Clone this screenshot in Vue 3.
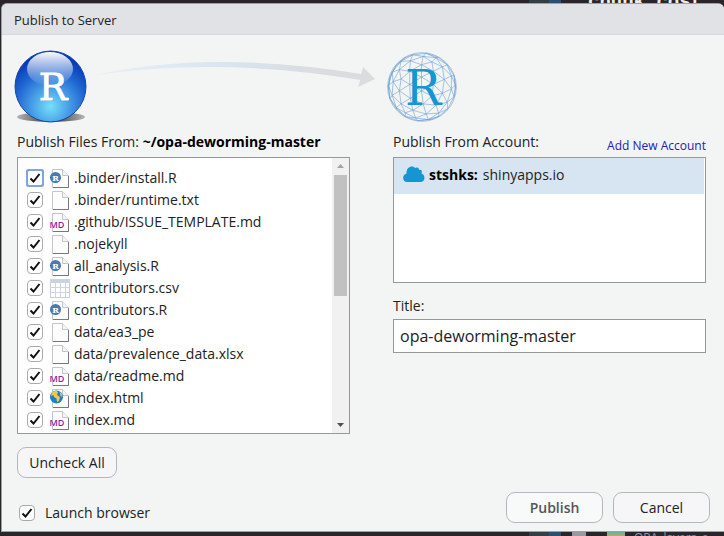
<script setup>
import { ref } from 'vue'

const files = ref([
  { name: '.binder/install.R', kind: 'r', checked: true },
  { name: '.binder/runtime.txt', kind: 'plain', checked: true },
  { name: '.github/ISSUE_TEMPLATE.md', kind: 'md', checked: true },
  { name: '.nojekyll', kind: 'plain', checked: true },
  { name: 'all_analysis.R', kind: 'r', checked: true },
  { name: 'contributors.csv', kind: 'csv', checked: true },
  { name: 'contributors.R', kind: 'r', checked: true },
  { name: 'data/ea3_pe', kind: 'plain', checked: true },
  { name: 'data/prevalence_data.xlsx', kind: 'plain', checked: true },
  { name: 'data/readme.md', kind: 'md', checked: true },
  { name: 'index.html', kind: 'html', checked: true },
  { name: 'index.md', kind: 'md', checked: true }
])
const title = ref('opa-deworming-master')
const launch = ref(true)

function uncheckAll() {
  files.value.forEach((f) => { f.checked = false })
}

// Wireframe globe: a subdivided icosahedron seen from the front.
function globePath(radius, cx, cy, freq) {
  const t = (1 + Math.sqrt(5)) / 2
  const v = [
    [-1, t, 0], [1, t, 0], [-1, -t, 0], [1, -t, 0],
    [0, -1, t], [0, 1, t], [0, -1, -t], [0, 1, -t],
    [t, 0, -1], [t, 0, 1], [-t, 0, -1], [-t, 0, 1]
  ]
  const faces = [
    [0, 11, 5], [0, 5, 1], [0, 1, 7], [0, 7, 10], [0, 10, 11],
    [1, 5, 9], [5, 11, 4], [11, 10, 2], [10, 7, 6], [7, 1, 8],
    [3, 9, 4], [3, 4, 2], [3, 2, 6], [3, 6, 8], [3, 8, 9],
    [4, 9, 5], [2, 4, 11], [6, 2, 10], [8, 6, 7], [9, 8, 1]
  ]
  const project = (p) => {
    const len = Math.hypot(...p)
    const [x, y, z] = p.map((n) => n / len)
    const a = 0.35
    const b = 0.3
    const x1 = x * Math.cos(a) + z * Math.sin(a)
    const z1 = z * Math.cos(a) - x * Math.sin(a)
    const y1 = y * Math.cos(b) - z1 * Math.sin(b)
    const z2 = y * Math.sin(b) + z1 * Math.cos(b)
    return [(cx + x1 * radius).toFixed(1), (cy + y1 * radius).toFixed(1), z2]
  }
  const edges = new Set()
  for (const [a, b, c] of faces) {
    const at = (i, j) => {
      const k = freq - i - j
      return project([0, 1, 2].map((n) => v[a][n] * k + v[b][n] * i + v[c][n] * j))
    }
    for (let i = 0; i < freq; i++) {
      for (let j = 0; j < freq - i; j++) {
        const tri = [at(i, j), at(i + 1, j), at(i, j + 1)]
        tri.forEach((p, n) => {
          const q = tri[(n + 1) % 3]
          if (p[2] < -0.2 || q[2] < -0.2) return
          const ends = [`${p[0]} ${p[1]}`, `${q[0]} ${q[1]}`].sort()
          edges.add(`M${ends[0]}L${ends[1]}`)
        })
      }
    }
  }
  return [...edges].join('')
}
const globe = globePath(34, 35, 35, 3)
</script>

<template>
  <div class="desktop">
    <div class="strip top" aria-hidden="true"><span class="tab"></span><span class="code">chunk_cost</span></div>
    <form class="dialog" role="dialog" aria-labelledby="dlg-title" @submit.prevent>
      <h1 id="dlg-title" class="caption">Publish to Server</h1>
      <div class="body">
        <div class="banner">
          <svg class="ball" viewBox="0 0 74 74" aria-hidden="true">
            <defs>
              <radialGradient id="ballFill" cx="0.5" cy="0.78" r="0.72">
                <stop offset="0" stop-color="#76e0fb" />
                <stop offset="0.3" stop-color="#4fa9ea" />
                <stop offset="0.68" stop-color="#1f66d2" />
                <stop offset="1" stop-color="#0638b4" />
              </radialGradient>
              <linearGradient id="ballShine" x1="0" y1="0" x2="0" y2="1">
                <stop offset="0" stop-color="#fff" stop-opacity="0.98" />
                <stop offset="0.45" stop-color="#fff" stop-opacity="0.55" />
                <stop offset="1" stop-color="#fff" stop-opacity="0" />
              </linearGradient>
              <linearGradient id="ballShade">
                <stop offset="0" stop-color="#b2b4b5" />
                <stop offset="0.5" stop-color="#333" />
                <stop offset="1" stop-color="#b2b4b5" />
              </linearGradient>
            </defs>
            <ellipse cx="37" cy="67" rx="34" ry="5" fill="url(#ballShade)" />
            <circle cx="36.500" cy="36.500" r="35.500" fill="url(#ballFill)" stroke="#1746ae" />
            <ellipse cx="36" cy="19" rx="23" ry="17" fill="url(#ballShine)" />
            <text class="slab" x="40" y="51" fill="#134aa5" opacity="0.4">R</text>
            <text class="slab" x="39" y="50" fill="#fff" stroke="#fff" stroke-width="0.8">R</text>
          </svg>
          <svg class="arrow" viewBox="0 0 300 40" aria-hidden="true">
            <defs>
              <linearGradient id="sweep">
                <stop offset="0" stop-color="#eaf0f5" />
                <stop offset="0.5" stop-color="#d8e4ef" />
                <stop offset="0.8" stop-color="#dadce0" />
              </linearGradient>
            </defs>
            <path d="M2 22Q120 -5 274 20L276 13L288 25L271 33L273 26Q130 2 2 22Z" fill="url(#sweep)" />
          </svg>
          <svg class="globe" viewBox="0 0 70 70" aria-hidden="true">
            <circle cx="35" cy="35" r="34.300" fill="none" stroke="#8db3dc" stroke-width="0.8" />
            <path :d="globe" fill="none" stroke="#6d9fd3" stroke-width="0.600" />
            <text class="slab big" x="36" y="53" fill="#1396d1">R</text>
          </svg>
        </div>

        <div class="columns">
          <section class="left">
            <div class="heading">Publish Files From: <b>~/opa-deworming-master</b></div>
            <div class="files">
              <ul>
                <li v-for="(file, i) in files" :key="file.name">
                  <label>
                    <input v-model="file.checked" type="checkbox" :class="{ focused: i === 0 }" />
                    <svg class="icon" viewBox="0 0 20 20" aria-hidden="true">
                      <template v-if="file.kind === 'csv'">
                        <rect x="0.500" y="1.500" width="19" height="18" fill="#fff" stroke="#c8cfdc" />
                        <path d="M0 1h20v4H0z" fill="#cbd3df" />
                        <path d="M5.500 5v15M10.500 5v15M15.500 5v15M1 9.500h18M1 14.500h18" stroke="#ccd5e6" />
                      </template>
                      <template v-else>
                        <path d="M2.500 1.500h10l6 6v12h-16z" fill="#fdfdfe" stroke="#c3c5ca" />
                        <path d="M18.500 8v11.500H3" fill="none" stroke="#737984" />
                        <path d="M12.500 1.500v6h6" fill="#f4f5f6" stroke="#c3c5ca" />
                      </template>
                      <template v-if="file.kind === 'r'">
                        <circle cx="5.500" cy="9.500" r="5.500" fill="#4b78ae" />
                        <text class="rmark" x="5.500" y="12.500">R</text>
                      </template>
                      <text v-if="file.kind === 'md'" class="mdmark" x="-0.500" y="16">MD</text>
                      <template v-if="file.kind === 'html'">
                        <circle cx="6.500" cy="9" r="6.500" fill="#1a83bd" />
                        <path d="M2 4.500L6 2.500L8 4L7 7L10 9L9 13L7 14L6.500 10.500L4 9L3.500 7L1 8Z" fill="#eec65a" />
                        <path d="M9.500 4L12 6L12.500 9L10.500 8Z" fill="#e4bd57" />
                      </template>
                    </svg>
                    <span>{{ file.name }}</span>
                  </label>
                </li>
              </ul>
              <div class="scrollbar" aria-hidden="true">
                <svg viewBox="0 0 7 4"><path d="M0 4L3.500 0L7 4Z" fill="#a3a3a3" /></svg>
                <div class="track"><div class="thumb"></div></div>
                <svg viewBox="0 0 7 4"><path d="M0 0L3.500 4L7 0Z" fill="#505050" /></svg>
              </div>
            </div>
            <button type="button" class="uncheck" @click="uncheckAll">Uncheck All</button>
          </section>

          <section class="right">
            <div class="heading split"><span>Publish From Account:</span><a href="#">Add New Account</a></div>
            <div class="accounts">
              <div class="account">
                <svg viewBox="0 0 22 16" aria-hidden="true">
                  <path d="M4 16C-1 16 -1 8.500 3.500 7.500C3 1 9 -1.500 12.500 2C15 1 16 2 16 4C18.500 3 19.500 5 18.500 7.500C23 9 22 16 18 16Z" fill="#1396d1" />
                </svg>
                <b>stshks:</b><span>shinyapps.io</span>
              </div>
            </div>
            <label class="title-label" for="content-title">Title:</label>
            <input id="content-title" v-model="title" class="title-input" type="text" />
          </section>
        </div>

        <div class="footer">
          <label class="launch"><input v-model="launch" type="checkbox" />Launch browser</label>
          <div class="actions">
            <button type="submit" class="primary">Publish</button>
            <button type="button">Cancel</button>
          </div>
        </div>
      </div>
    </form>
    <div class="strip bottom" aria-hidden="true"><span class="tab"></span><span class="page"></span><span class="thumbnail"></span><span class="layer">OPA_layers_e</span></div>
  </div>
</template>

<style>
body {
  background: #29252a;
}
</style>

<style scoped>
* {
  box-sizing: border-box;
}
.desktop {
  display: flex;
  flex-direction: column;
  min-height: 100vh;
  padding-left: 1px;
  overflow: hidden;
  background: #29252a;
  color: #222;
  font: 14px/20px "Open Sans", "Noto Sans", sans-serif;
}
.strip {
  display: flex;
  height: 3px;
  overflow: hidden;
  background: #29252a;
}
.strip.top {
  align-items: center;
}
.strip.bottom {
  height: 4px;
}
.tab {
  width: 32px;
  height: 4px;
  margin-left: 528px;
  background: linear-gradient(90deg, #333e47 20px, #2e4e70 20px);
}
.code {
  margin-left: 27px;
  color: #eee;
  font: bold 19px/20px "Liberation Mono", monospace;
}
.page {
  width: 14px;
  margin-left: 11px;
  background: #999aa1;
}
.thumbnail {
  width: 18px;
  margin-left: 21px;
  background: linear-gradient(#6ba8b6, #b6b14c);
}
.layer {
  margin-left: 9px;
  color: #8895bb;
  font-size: 12px;
  line-height: 12px;
}
.dialog {
  display: flex;
  flex: 1;
  flex-direction: column;
  border: 1px solid #a0a0a2;
  border-right: 0;
  border-radius: 6px 6px 0 0;
  background: #f3f5f4;
  overflow: hidden;
}
.caption {
  margin: 0;
  padding: 6px 12px 4px;
  border-bottom: 1px solid #d6d8dc;
  background: #e1e2e6;
  font-size: 13px;
  font-weight: 400;
  line-height: 20px;
}
.body {
  display: flex;
  flex: 1;
  flex-direction: column;
  padding: 14px 18px 8px 15px;
}
.banner {
  display: flex;
  align-items: center;
  height: 76px;
  margin-left: -3px;
}
.ball {
  width: 74px;
  height: 74px;
}
.arrow {
  width: 299px;
  height: 40px;
  margin-bottom: 26px;
}
.globe {
  width: 70px;
  height: 70px;
}
.slab {
  font: 38px "DejaVu Serif", serif;
  text-anchor: middle;
}
.slab.big {
  font-size: 48px;
}
.columns {
  display: grid;
  grid-template-columns: 333fr 313fr;
  gap: 43px;
  padding-top: 7px;
}
.heading {
  height: 25px;
  color: #222;
  white-space: nowrap;
}
.heading b,
.account b {
  color: #000;
}
.split {
  display: flex;
  justify-content: space-between;
}
.split a {
  padding-top: 4px;
  color: #2220b5;
  font-size: 12px;
  text-decoration: none;
}
.files {
  display: flex;
  height: 277px;
  border: 1px solid #979899;
  background: #fff;
}
.files ul {
  flex: 1;
  margin: 0;
  padding: 9px 0 0 9px;
  overflow: hidden;
  list-style: none;
}
.files label {
  display: flex;
  align-items: center;
  height: 22px;
  white-space: nowrap;
}
.icon {
  width: 20px;
  height: 20px;
  margin: 0 4px 0 7px;
  overflow: visible;
}
.rmark {
  fill: #fff;
  font: bold 8px "DejaVu Serif", serif;
  text-anchor: middle;
}
.mdmark {
  fill: #951ba0;
  font: 600 9px "Open Sans", sans-serif;
}
input[type="checkbox"] {
  width: 16px;
  height: 16px;
  margin: 0;
  appearance: none;
  border: 1px solid #aaa;
  border-radius: 4px;
  background: #fff;
}
input[type="checkbox"]:checked {
  background: #fff url("data:image/svg+xml,%3Csvg xmlns='http://www.w3.org/2000/svg' viewBox='0 0 14 14'%3E%3Cpath d='M2.500 7.500L5.500 10.500L11.500 3' fill='none' stroke='%23111' stroke-width='2'/%3E%3C/svg%3E") center / 14px 14px;
}
input[type="checkbox"].focused {
  box-shadow: 0 0 0 1px #82a5da;
  outline: 2px solid #82a5da;
  outline-offset: -1px;
  border-radius: 2px;
}
.scrollbar {
  display: flex;
  flex-direction: column;
  align-items: center;
  width: 17px;
  padding: 6px 2px;
  background: #f1f1f1;
}
.scrollbar svg {
  width: 7px;
  height: 4px;
}
.track {
  flex: 1;
  width: 13px;
  padding: 7px 0;
}
.thumb {
  height: 50%;
  background: #c1c1c1;
}
button {
  height: 31px;
  border: 1px solid #b6b7bb;
  border-radius: 9px;
  background: #f6f6f9;
  color: #222;
  font: inherit;
}
.uncheck {
  width: 100px;
  margin-top: 13px;
  padding: 0;
}
.accounts {
  height: 126px;
  border: 1px solid #979899;
  background: #fff;
}
.account {
  display: flex;
  align-items: center;
  height: 36px;
  padding: 0 0 2px 9px;
  margin-right: 1px;
  background: #d6e5f1;
}
.account svg {
  width: 22px;
  height: 16px;
  margin: 0 4px 2px 0;
}
.account span {
  margin-left: 5px;
}
.title-label {
  display: block;
  margin: 13px 0 3px;
}
.title-input {
  display: block;
  width: 100%;
  height: 34px;
  padding: 0 6px;
  border: 1px solid #979899;
  border-radius: 0;
  background: #fff;
  color: #222;
  font: inherit;
  font-size: 16px;
}
.footer {
  display: flex;
  justify-content: space-between;
  margin-top: auto;
}
.launch {
  display: flex;
  gap: 10px;
  align-items: center;
  padding: 10px 0 0 2px;
}
.actions {
  display: flex;
  gap: 10px;
  margin-right: -4px;
}
.actions button {
  width: 97px;
}
.actions .primary {
  background: #f8f9f9;
  color: #555;
  font-weight: 600;
}
</style>
